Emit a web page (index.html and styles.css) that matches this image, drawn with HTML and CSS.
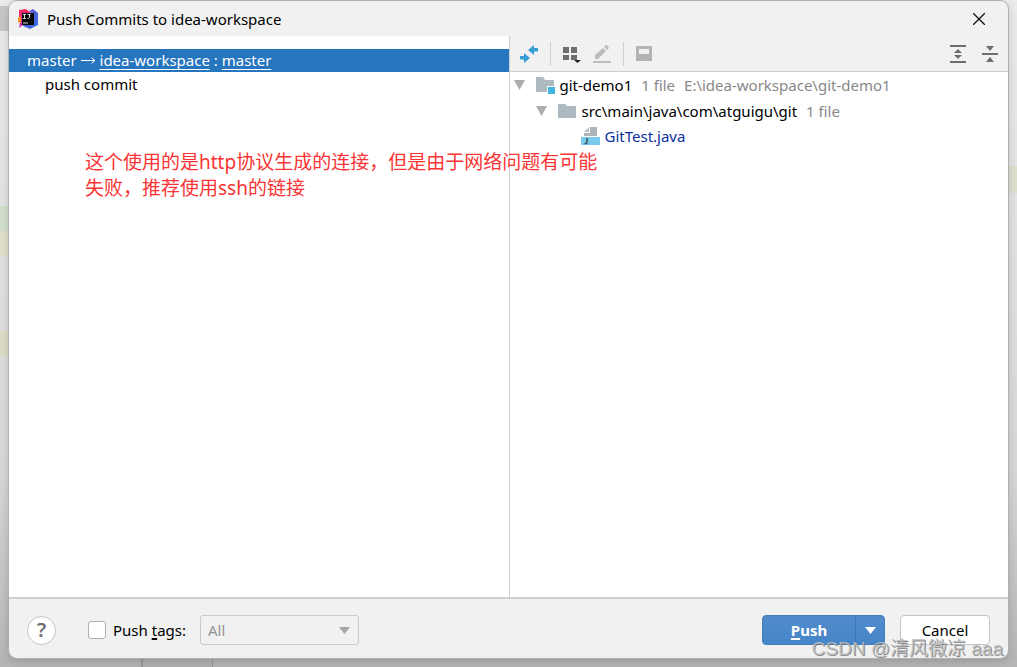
FILE: index.html
```html
<!DOCTYPE html>
<html lang="en">
<head>
<meta charset="utf-8">
<title>Push Commits to idea-workspace</title>
<link rel="stylesheet" href="styles.css">
</head>
<body>
<div class="backdrop" aria-hidden="true">
  <i class="mark mark-tab"></i>
  <i class="mark mark-added"></i>
  <i class="mark mark-warn"></i>
  <i class="mark mark-warn-low"></i>
  <i class="mark mark-right"></i>
  <i class="mark mark-gutter"></i>
</div>
<main class="dialog">
  <header class="titlebar">
    <svg class="logo" viewBox="0 0 20 20" width="20" height="20">
      <defs>
        <linearGradient id="blue" x1="0" y1="0" x2="1" y2="1"><stop offset="0" stop-color="#9b4fd0"/><stop offset=".5" stop-color="#4a5fd8"/><stop offset="1" stop-color="#3978f0"/></linearGradient>
        <linearGradient id="pink" x1="0" y1="0" x2="0" y2="1"><stop offset="0" stop-color="#ff2857"/><stop offset="1" stop-color="#c738c8"/></linearGradient>
      </defs>
      <path d="M1 1 8 0l5 4-8 12-4 3 1-6-1-5z" fill="url(#pink)"/>
      <path d="M0 9 3 7v7L0 13z" fill="#fc8a1d"/>
      <path d="M11 2 15 0l5 4v12l-8 4-7-3 8-13z" fill="url(#blue)"/>
      <path d="M4 4h12v12H4z" fill="#080808"/>
      <path d="M5 5.500h3M6.500 5.500v4M5 9.500h3M9.500 5.500h3M11.500 5.500v3q0 1-2 1M5 14h5" fill="none" stroke="#ddd"/>
    </svg>
    <h1 class="title">Push Commits to idea-workspace</h1>
    <button class="close" type="button" aria-label="Close">
      <svg viewBox="0 0 12 12" width="12" height="12"><path d="M0 0 12 12M12 0 0 12" stroke="#111" stroke-width="1.300"/></svg>
    </button>
  </header>
  <div class="content">
    <section class="commits">
      <div class="branch">master <svg class="arrow" viewBox="0 0 15 10" width="15" height="10"><path d="M0 4.500h14M10.500 1.500 14 4.500l-3.500 3" fill="none" stroke="#fff"/></svg> <a class="link" href="#remote">idea-workspace</a> : <a class="link" href="#target">master</a></div>
      <div class="commit">push commit</div>
      <p class="note" lang="zh-CN">这个使用的是http协议生成的连接，但是由于网络问题有可能<br>失败，推荐使用ssh的链接</p>
    </section>
    <section class="changes">
      <div class="toolbar">
        <button class="tool" type="button" aria-label="Show Diff"><svg viewBox="0 0 18 18" width="18" height="18"><path d="M0 11h4V8l6 5-6 5v-3.500H0zM18 3h-4V0L8 5l6 5V6.500h4z" fill="#389fd6"/></svg></button>
        <span class="divider"></span>
        <button class="tool" type="button" aria-label="Group By"><svg viewBox="0 0 18 18" width="18" height="18"><path d="M0 2h6v6H0zM8 2h6v6H8zM0 10h6v5H0zM8 10h6v5H8z" fill="#6e6e6e"/><path d="M11 15h7l-3.500 3z" fill="#222"/></svg></button>
        <button class="tool" type="button" aria-label="Edit Source" disabled><svg viewBox="0 0 18 18" width="18" height="18"><path d="M0 16h18v2H0zM2 14v-4l8-7 3 3-8 8zM11 2l2-2q2 0 3 3l-2 2z" fill="#bcbcbc"/></svg></button>
        <span class="divider"></span>
        <button class="tool" type="button" aria-label="Show Details" disabled><svg viewBox="0 0 18 18" width="18" height="18"><path d="M0 1h16v15H0zM3 4v5h10V4z" fill="#b4b4b4" fill-rule="evenodd"/></svg></button>
        <span class="spacer"></span>
        <button class="tool" type="button" aria-label="Expand All"><svg viewBox="0 0 16 18" width="16" height="18"><path d="M0 0h16v2H0zM0 16h16v2H0zM4 8l4-4 4 4zM4 10l4 4 4-4z" fill="#6e6e6e"/></svg></button>
        <button class="tool tool-last" type="button" aria-label="Collapse All"><svg viewBox="0 0 16 18" width="16" height="18"><path d="M0 8h16v2H0zM4 1h8L8 6zM4 17l4-5 4 5z" fill="#6e6e6e"/></svg></button>
      </div>
      <div class="tree">
        <div class="row">
          <svg class="twisty" viewBox="0 0 11 10" width="11" height="10"><path d="M0 0h11L5.500 10z"/></svg>
          <svg class="icon" viewBox="0 0 20 18" width="20" height="18"><path d="M0 1h7l2 3h9v6h-7v6H0z" fill="#aeb9c0"/><path d="M12 11h7v7h-7z" fill="#40b6e0"/></svg>
          <span>git-demo1</span><span class="muted">1 file</span><span class="muted">E:\idea-workspace\git-demo1</span>
        </div>
        <div class="row row-folder">
          <svg class="twisty" viewBox="0 0 11 10" width="11" height="10"><path d="M0 0h11L5.500 10z"/></svg>
          <svg class="icon" viewBox="0 0 20 18" width="20" height="18"><path d="M0 2h7l2 2h9v12H0z" fill="#aeb9c0"/></svg>
          <span>src\main\java\com\atguigu\git</span><span class="muted">1 file</span>
        </div>
        <div class="row row-file">
          <svg class="icon" viewBox="0 0 20 18" width="20" height="18"><path d="M9 0h7v9H3V6h6z" fill="#aeb5ba"/><path d="M3 5 8 0v5z" fill="#b7bdc1"/><path d="M0 10h19v8H0z" fill="#78cbeb"/><path d="M6 11v4q0 2-2.500 1.500" fill="none" stroke="#315562" stroke-width="1.500"/></svg>
          <span class="file">GitTest.java</span>
        </div>
      </div>
    </section>
  </div>
  <footer class="footer">
    <button class="help" type="button" aria-label="Help">?</button>
    <input class="check" type="checkbox" id="tags">
    <label class="tags-label" for="tags">Push <u>t</u>ags:</label>
    <div class="select-wrap">
      <select class="select" aria-label="Tags to push" disabled><option>All</option></select>
      <svg class="select-arrow" viewBox="0 0 11 7" width="11" height="7"><path d="M0 0h11L5.500 7z" fill="#a6a6a6"/></svg>
    </div>
    <span class="spacer"></span>
    <div class="split">
      <button class="push" type="button"><u>P</u>ush</button>
      <button class="push-menu" type="button" aria-label="More push options"><svg viewBox="0 0 11 7" width="11" height="7"><path d="M0 0h11L5.500 7z" fill="#fff"/></svg></button>
    </div>
    <button class="cancel" type="button">Cancel</button>
  </footer>
</main>
<div class="watermark">CSDN @清风微凉 aaa</div>
</body>
</html>
```
FILE: styles.css
```css
* {
  box-sizing: border-box;
}

body {
  margin: 0;
  min-height: 100vh;
  padding: 0 8px 8px;
  display: flex;
  color: #000;
  font: 15px/24px "Noto Sans", "Noto Sans CJK SC", sans-serif;
  background: linear-gradient(#ebebeb, #d8d8d8 70%, #b5b5b5);
}

button,
select {
  font: inherit;
  color: inherit;
}

u {
  text-decoration-thickness: 2px;
  text-underline-offset: 2px;
  text-decoration-skip-ink: none;
}

.backdrop {
  position: absolute;
  inset: 0;
  overflow: hidden;
}

.mark {
  position: absolute;
  left: 0;
  width: 9px;
  height: 25px;
}

.mark-tab { top: 6px; background: #c7c7c7; }
.mark-added { top: 206px; background: #d2dfcd; }
.mark-warn { top: 231px; background: #e0e0c9; }
.mark-warn-low { top: 331px; background: #dcdcc5; }
.mark-right { top: 166px; left: auto; right: 0; height: 27px; background: #dfdfd0; }

.mark-gutter {
  top: auto;
  bottom: 0;
  left: 141px;
  width: 72px;
  height: 10px;
  background: #b1b1b1;
  border-left: 2px solid #999;
  border-right: 1px solid #999;
}

.dialog {
  position: relative;
  flex: 1;
  display: flex;
  flex-direction: column;
  border: 1px solid #b0b0b0;
  border-radius: 9px;
  background: #f1f1f1;
  box-shadow: 0 3px 8px rgba(0, 0, 0, 0.15);
  overflow: hidden;
}

.titlebar {
  display: flex;
  align-items: center;
  height: 35px;
  padding: 0 23px 0 9px;
  gap: 9px;
}

.title {
  flex: 1;
  margin: 0;
  font-size: 15px;
  font-weight: 400;
}

.close {
  display: flex;
  padding: 0;
  border: 0;
  background: none;
}

.content {
  flex: 1;
  display: grid;
  grid-template-columns: 1fr 1fr;
  border-bottom: 2px solid #d0d0d0;
  background: #fff;
}

.commits {
  padding-top: 13px;
}

.changes {
  border-left: 1px solid #cecece;
}

.branch {
  height: 23px;
  padding-left: 18px;
  line-height: 23px;
  color: #fff;
  background: #2675bf;
}

.link {
  color: inherit;
  text-underline-offset: 3px;
  text-decoration-skip-ink: none;
}

.commit {
  padding-left: 36px;
}

.note {
  position: absolute;
  top: 148px;
  left: 76px;
  z-index: 1;
  margin: 0;
  font-size: 19px;
  line-height: 26px;
  white-space: nowrap;
  color: #fa3434;
}

.toolbar {
  display: flex;
  align-items: center;
  height: 36px;
  padding: 0 10px;
  gap: 12px;
  border-bottom: 1px solid #cecece;
  background: #f1f1f1;
}

.tool {
  display: flex;
  padding: 0;
  border: 0;
  background: none;
}

.tool-last {
  margin-left: 4px;
}

.divider {
  width: 1px;
  height: 24px;
  background: #cecece;
}

.spacer {
  flex: 1;
}

.tree {
  padding: 0 4px;
}

.row {
  display: flex;
  align-items: center;
  height: 25px;
  gap: 9px;
  white-space: nowrap;
}

.row:first-child {
  height: 26px;
}

.row-folder { padding-left: 22px; }
.row-file { padding-left: 67px; }

.twisty {
  margin-right: 2px;
  fill: #adadad;
}

.icon {
  margin-right: -5px;
}

.muted { color: #888; }
.file { color: #0a2f9f; }

.footer {
  display: flex;
  align-items: center;
  height: 59px;
  padding: 3px 18px 0 18px;
}

.help {
  width: 29px;
  height: 29px;
  padding: 0;
  border: 1px solid #c4c4c4;
  border-radius: 50%;
  background: #fff;
  font-size: 20px;
  font-weight: 600;
  line-height: 26px;
  color: #6e6e6e;
}

.check {
  appearance: none;
  width: 18px;
  height: 18px;
  margin: 0 7px 0 32px;
  border: 1px solid #b0b0b0;
  border-radius: 3px;
  background: #fff;
}

.select-wrap {
  position: relative;
  width: 159px;
  margin-left: 14px;
}

.select {
  appearance: none;
  display: block;
  width: 100%;
  height: 30px;
  padding: 0 7px;
  border: 1px solid #c9c9c9;
  border-radius: 3px;
  background: #f1f1f1;
  color: #929292;
  opacity: 1;
}

.select-arrow {
  position: absolute;
  top: 12px;
  right: 9px;
}

.split {
  display: flex;
  width: 123px;
  height: 30px;
  margin-right: 15px;
  border: 1px solid #437dba;
  border-radius: 4px;
  background: linear-gradient(#528ccb, #4585c9);
  color: #fff;
}

.push {
  flex: 1;
  padding: 0;
  border: 0;
  background: none;
  font-weight: 700;
}

.push-menu {
  display: flex;
  align-items: center;
  justify-content: center;
  width: 29px;
  padding: 0;
  border: 0;
  border-left: 1px solid #3c76b4;
  background: none;
}

.cancel {
  width: 90px;
  height: 30px;
  padding: 0;
  border: 1px solid #c4c4c4;
  border-radius: 4px;
  background: #fff;
}

.watermark {
  position: absolute;
  right: 14px;
  bottom: 4px;
  font-family: "Liberation Sans", "Noto Sans CJK SC", sans-serif;
  font-size: 19px;
  line-height: 28px;
  color: rgba(190, 190, 190, 0.85);
  text-shadow: 1px 1px 0 rgba(110, 110, 110, 0.75);
  pointer-events: none;
}
```
